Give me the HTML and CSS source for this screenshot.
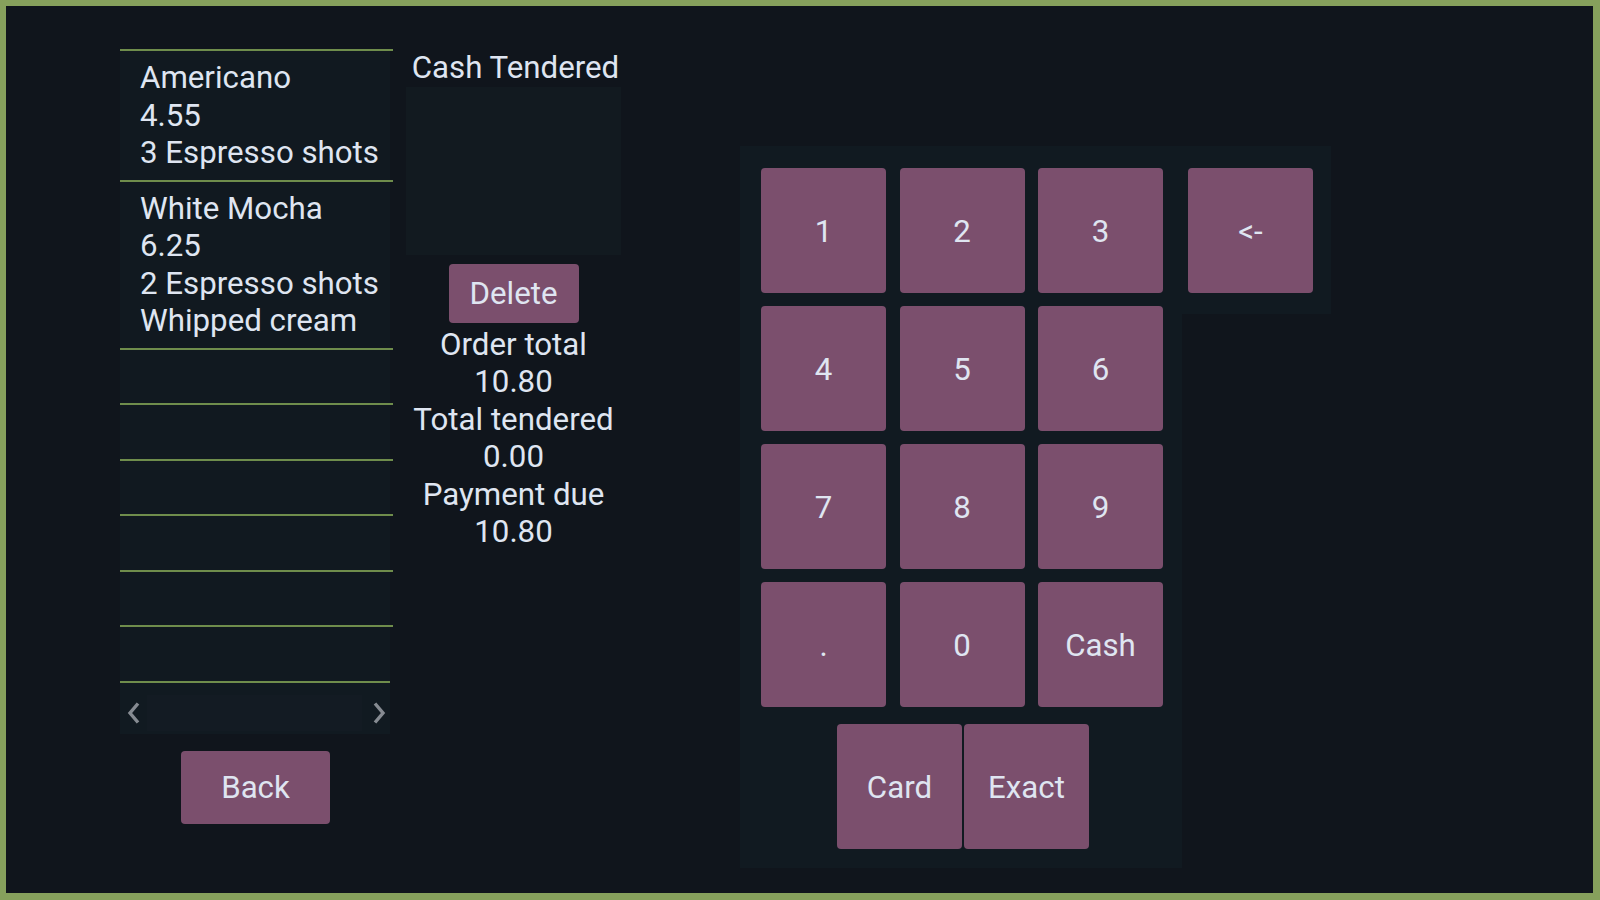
FILE: index.html
```html
<!DOCTYPE html>
<html lang="en">
<head>
<meta charset="utf-8">
<title>Payment</title>
<link rel="stylesheet" href="styles.css">
</head>
<body>
<div class="screen">
  <div class="order-col">
    <div class="order-list">
      <div class="item">
        <div>Americano</div>
        <div>4.55</div>
        <div>3 Espresso shots</div>
      </div>
      <div class="item">
        <div>White Mocha</div>
        <div>6.25</div>
        <div>2 Espresso shots</div>
        <div>Whipped cream</div>
      </div>
      <div class="item"><div>&nbsp;</div></div>
      <div class="item"><div>&nbsp;</div></div>
      <div class="item"><div>&nbsp;</div></div>
      <div class="item"><div>&nbsp;</div></div>
      <div class="item"><div>&nbsp;</div></div>
      <div class="item"><div>&nbsp;</div></div>
    </div>
    <div class="scroller">
      <span class="arrow">
        <svg width="13" height="22" viewBox="0 0 13 22"><path d="M11 1.5 L3 11 L11 20.5" fill="none" stroke="#868b92" stroke-width="3.4"/></svg>
      </span>
      <div class="track"></div>
      <span class="arrow arrow-right">
        <svg width="13" height="22" viewBox="0 0 13 22"><path d="M2 1.5 L10 11 L2 20.5" fill="none" stroke="#868b92" stroke-width="3.4"/></svg>
      </span>
    </div>
    <button class="btn back">Back</button>
  </div>

  <div class="tender-col">
    <div class="label">Cash Tendered</div>
    <div class="display"></div>
    <button class="btn delete">Delete</button>
    <div class="summary">
      <div>Order total</div>
      <div>10.80</div>
      <div>Total tendered</div>
      <div>0.00</div>
      <div>Payment due</div>
      <div>10.80</div>
    </div>
  </div>

  <div class="keypad-wrap">
    <div class="keypad">
      <div class="keys">
        <button class="btn key">1</button>
        <button class="btn key">2</button>
        <button class="btn key">3</button>
        <button class="btn key">4</button>
        <button class="btn key">5</button>
        <button class="btn key">6</button>
        <button class="btn key">7</button>
        <button class="btn key">8</button>
        <button class="btn key">9</button>
        <button class="btn key">.</button>
        <button class="btn key">0</button>
        <button class="btn key">Cash</button>
      </div>
      <div class="pay-row">
        <button class="btn key">Card</button>
        <button class="btn key">Exact</button>
      </div>
    </div>
    <div class="side">
      <button class="btn key">&lt;-</button>
    </div>
  </div>
</div>
</body>
</html>
```

FILE: styles.css
```css
* {
  box-sizing: border-box;
}

html {
  background: #86a05c;
  height: 100%;
}

body {
  margin: 0;
  height: 100%;
  padding: 6px 7px 7px 6px;
  font-family: Roboto, "Liberation Sans", sans-serif;
  font-size: 31.25px;
  line-height: 37.5px;
  color: #dfe5f1;
}

.screen {
  height: 100%;
  background: #10151c;
  display: flex;
  align-items: flex-start;
  padding: 41px 0 0 114px;
}

.order-col {
  width: 273px;
  margin-top: 2px;
  display: flex;
  flex-direction: column;
}

.order-list {
  width: 270px;
  background: #111920;
  border-bottom: 2px solid #6f8d4c;
  margin-right: 3px;
}

.item {
  border-top: 2px solid #6f8d4c;
  margin-right: -3px;
  padding: 8px 20px;
  white-space: nowrap;
}

.scroller {
  width: 270px;
  height: 51px;
  background: #111a21;
  display: flex;
  align-items: center;
  padding: 12px 0 3px;
}

.arrow {
  width: 27px;
  height: 100%;
  display: flex;
  align-items: center;
  justify-content: center;
  padding-top: 1px;
}

.arrow-right {
  width: 28px;
  padding-left: 6px;
}

.track {
  flex: 1;
  height: 100%;
  background: #131b23;
}

.btn {
  font-family: inherit;
  font-size: 31.25px;
  line-height: 37.5px;
  color: #dfe5f1;
  background: #7b4f6d;
  border: none;
  border-radius: 4px;
  padding: 2px 0 0;
  display: flex;
  align-items: center;
  justify-content: center;
}

.back {
  width: 149px;
  height: 73px;
  margin: 17px 0 0 61px;
}

.tender-col {
  width: 215px;
  margin-left: 13px;
  display: flex;
  flex-direction: column;
  align-items: center;
  text-align: center;
}

.label {
  white-space: nowrap;
  margin-left: 4px;
  padding-top: 2px;
}

.display {
  width: 215px;
  height: 168px;
  margin-top: 0;
  background: #121a20;
}

.delete {
  width: 130px;
  height: 59px;
  margin-top: 9px;
}

.summary {
  margin-top: 3px;
  white-space: nowrap;
}

.keypad-wrap {
  display: flex;
  align-items: flex-start;
  margin: 99px 0 0 119px;
}

.keypad {
  background: #111a21;
  padding: 22px 19px 19px 21px;
}

.keys {
  display: grid;
  grid-template-columns: repeat(3, 125px);
  grid-auto-rows: 125px;
  column-gap: 13.5px;
  row-gap: 13px;
}

.pay-row {
  display: flex;
  justify-content: center;
  gap: 2px;
  margin-top: 17px;
  padding-left: 2px;
}

.key {
  width: 125px;
  height: 125px;
}

.side {
  background: #111a21;
  padding: 22px 18px 21px 6px;
}
```
